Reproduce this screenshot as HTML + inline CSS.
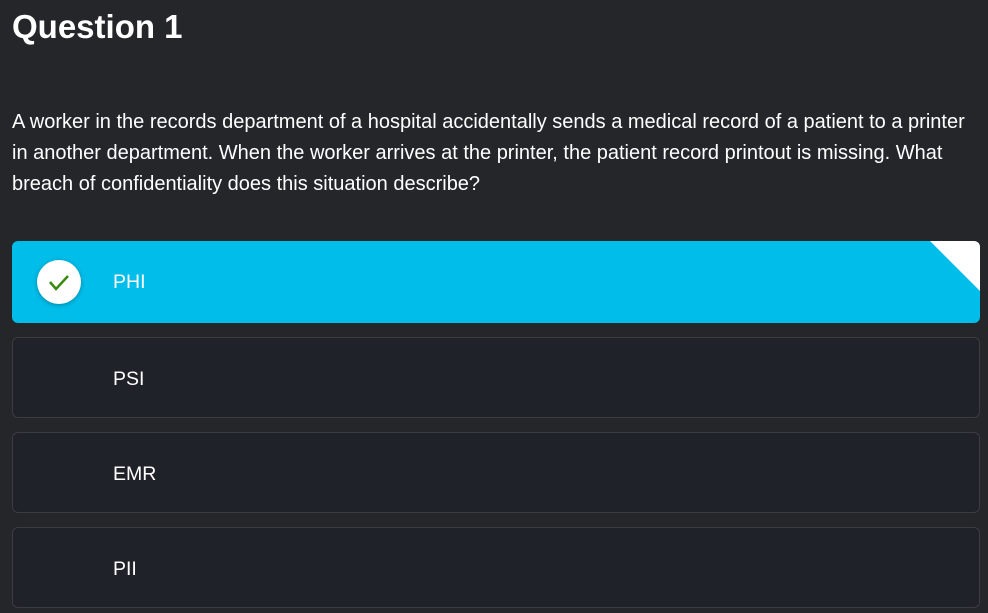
<!DOCTYPE html>
<html><head><style>
body{margin:0;width:988px;height:613px;background:#25262a;font-family:"Liberation Sans",sans-serif;color:#fff;overflow:hidden;position:relative}
h1{position:absolute;left:12px;top:8px;margin:0;font-size:33px;font-weight:bold}
p{position:absolute;left:12px;top:107px;margin:0;width:962px;font-size:20px;line-height:31px;letter-spacing:0px}
.o{position:absolute;left:12px;width:968px;height:81px;border:1px solid #3b3c42;border-radius:6px;background:#202229;box-sizing:border-box}
.o span{position:absolute;left:100px;top:30px;font-size:19.5px}
.sel{background:#00bde9;border:none;height:82px;width:968px;overflow:hidden}
.tri{position:absolute;right:0;top:0;width:0;height:0;border-top:50px solid #fff;border-left:50px solid transparent}
.c{position:absolute;left:25px;top:19px;width:44px;height:44px;border-radius:50%;background:#fff;box-shadow:0 1px 4px rgba(0,0,0,.3)}
</style></head><body>
<h1>Question 1</h1>
<p>A worker in the records department of a hospital accidentally sends a medical record of a patient to a printer in another department. When the worker arrives at the printer, the patient record printout is missing. What breach of confidentiality does this situation describe?</p>
<div class="o sel" style="top:241px"><div class="tri"></div><div class="c"><svg width="44" height="44"><path d="M13 22 L19 29 L31 16" fill="none" stroke="#3a8a10" stroke-width="2.5"/></svg></div><span style="left:101px;top:30px">PHI</span></div>
<div class="o" style="top:337px"><span>PSI</span></div>
<div class="o" style="top:432px"><span>EMR</span></div>
<div class="o" style="top:527px"><span>PII</span></div>
</body></html>
